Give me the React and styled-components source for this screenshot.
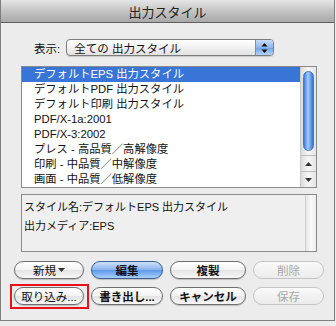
import { createGlobalStyle, styled } from "styled-components";

const GlobalStyle = createGlobalStyle`
  html, body {
    margin: 0;
    padding: 0;
    background: #ececec;
  }
  body {
    font-family: "Liberation Sans", "Noto Sans CJK JP", sans-serif;
    font-size: 11px;
    color: #111;
  }
`;

const jp = `"Liberation Sans", "Noto Sans CJK JP", sans-serif`;

const StyleWindow = styled.div`
  width: 333px;
  height: 320px;
  border: 1px solid #7e7e7e;
  border-top: none;
  background: #ececec;
  display: flex;
  flex-direction: column;
  overflow: hidden;
`;

const StyleTitleBar = styled.div`
  height: 22px;
  border-bottom: 1px solid #5e5e5e;
  background: linear-gradient(#e6e6e6, #c4c4c4 50%, #a9a9a9);
  display: flex;
  align-items: center;
  justify-content: center;
  font-family: ${jp};
  font-size: 13px;
  color: #222;
`;

const StyleBody = styled.div`
  display: flex;
  flex-direction: column;
  padding: 16px 0 0 20px;
`;

const StyleSelectRow = styled.div`
  display: flex;
  align-items: center;
  gap: 6px;
  padding-left: 13px;
  height: 17px;
`;

const StyleLabel = styled.span`
  font-family: ${jp};
  font-size: 11.5px;
`;

const StyleSelect = styled.div`
  width: 206px;
  height: 15px;
  border: 1px solid #7c7c7c;
  border-radius: 4px;
  background: linear-gradient(#ffffff, #f1f1f1 50%, #e2e2e2);
  display: flex;
  align-items: center;
  justify-content: space-between;
  overflow: hidden;
  box-shadow: 0 1px 1px rgba(0, 0, 0, 0.15);
`;

const StyleSelectText = styled.span`
  font-family: ${jp};
  font-size: 11.5px;
  padding-left: 7px;
`;

const StyleStepper = styled.div`
  width: 17px;
  height: 15px;
  border-left: 1px solid #6d8fc4;
  background: linear-gradient(#c9ddf7, #8fb6ec 50%, #6ea1e6 51%, #b6d3f8);
  display: flex;
  align-items: center;
  justify-content: center;
`;

const StyleList = styled.div`
  margin-top: 10px;
  width: 294px;
  height: 120px;
  border: 1px solid #8a8a8a;
  background: #fff;
  display: flex;
`;

const StyleRows = styled.div`
  flex: 1;
  display: flex;
  flex-direction: column;
`;

const StyleRow = styled.div`
  height: 15px;
  line-height: 15px;
  padding-left: 12px;
  font-family: ${jp};
  font-size: 11.3px;
  white-space: nowrap;
  background: ${(props) => (props.$selected ? "#3875d7" : "transparent")};
  color: ${(props) => (props.$selected ? "#fff" : "#111")};
`;

const StyleScrollbar = styled.div`
  width: 15px;
  border-left: 1px solid #c8c8c8;
  background: linear-gradient(90deg, #dcdcdc, #f6f6f6 50%, #e4e4e4);
  display: flex;
  flex-direction: column;
`;

const StyleThumbArea = styled.div`
  flex: 1;
  padding: 4px 2px 0 2px;
`;

const StyleThumb = styled.div`
  height: 78px;
  border-radius: 6px;
  border: 1px solid #4a77bc;
  background: linear-gradient(90deg, #3d7be0, #a8cbf7 45%, #6ea4ec 70%, #3a73d6);
`;

const StyleArrow = styled.div`
  height: 15px;
  border-top: 1px solid #bdbdbd;
  display: flex;
  align-items: center;
  justify-content: center;
`;

const StyleInfo = styled.div`
  margin-top: 6px;
  width: 294px;
  height: 56px;
  border: 1px solid #8a8a8a;
  background: #efefef;
  display: flex;
`;

const StyleInfoText = styled.div`
  flex: 1;
  padding: 3px 0 0 2px;
  display: flex;
  flex-direction: column;
  gap: 3px;
  font-family: ${jp};
  font-size: 11px;
`;

const StyleInfoTrack = styled.div`
  width: 10px;
  border-left: 1px solid #d0d0d0;
  background: linear-gradient(90deg, #e6e6e6, #fafafa 50%, #ececec);
`;

const StyleButtons = styled.div`
  display: grid;
  grid-template-columns: 70px 72px 76px 71px;
  column-gap: 7px;
  row-gap: 8px;
  padding: 9px 0 0 13px;
  margin-left: -20px;
`;

const StyleButton = styled.div`
  position: relative;
  height: 16px;
  border-radius: 9px;
  border: 1px solid ${(props) =>
    props.$disabled ? "#c4c4c4" : props.$primary ? "#3d5f94" : "#6f6f6f"};
  background: ${(props) =>
    props.$primary
      ? "linear-gradient(#cfe2fa, #8ab4ee 48%, #5d98ea 52%, #a9d0fb)"
      : props.$disabled
      ? "linear-gradient(#fafafa, #f2f2f2 50%, #ebebeb)"
      : "linear-gradient(#ffffff, #f3f3f3 48%, #e4e4e4 52%, #f8f8f8)"};
  color: ${(props) => (props.$disabled ? "#a8a8a8" : "#111")};
  font-family: ${jp};
  font-size: 11.5px;
  font-weight: ${(props) => (props.$bold ? 700 : 400)};
  display: flex;
  align-items: center;
  justify-content: center;
  gap: 2px;
  box-shadow: ${(props) =>
    props.$disabled ? "none" : "0 1px 1px rgba(0, 0, 0, 0.2)"};

  &::after {
    content: "";
    display: ${(props) => (props.$highlight ? "block" : "none")};
    position: absolute;
    left: -5px;
    right: -6px;
    top: -4px;
    bottom: -5px;
    border: 2px solid #e8101a;
  }
`;

const Triangle = ({ up, color = "#222" }) => (
  <svg width="7" height="4" viewBox="0 0 7 4">
    <polygon points={up ? "3.5,0 7,4 0,4" : "0,0 7,0 3.5,4"} fill={color} />
  </svg>
);

const items = [
  "デフォルトEPS 出力スタイル",
  "デフォルトPDF 出力スタイル",
  "デフォルト印刷 出力スタイル",
  "PDF/X-1a:2001",
  "PDF/X-3:2002",
  "プレス - 高品質／高解像度",
  "印刷 - 中品質／中解像度",
  "画面 - 中品質／低解像度",
];

const buttons = [
  { label: "新規", menu: true },
  { label: "編集", primary: true, bold: true },
  { label: "複製", bold: true },
  { label: "削除", disabled: true },
  { label: "取り込み...", highlight: true },
  { label: "書き出し...", bold: true },
  { label: "キャンセル", bold: true },
  { label: "保存", disabled: true },
];

const App = () => {
  return (
    <>
      <GlobalStyle />
      <StyleWindow>
        <StyleTitleBar>出力スタイル</StyleTitleBar>
        <StyleBody>
          <StyleSelectRow>
            <StyleLabel>表示:</StyleLabel>
            <StyleSelect>
              <StyleSelectText>全ての 出力スタイル</StyleSelectText>
              <StyleStepper>
                <svg width="7" height="10" viewBox="0 0 7 10">
                  <polygon points="3.5,0 6.5,3.5 0.5,3.5" fill="#111" />
                  <polygon points="0.5,6.5 6.5,6.5 3.5,10" fill="#111" />
                </svg>
              </StyleStepper>
            </StyleSelect>
          </StyleSelectRow>

          <StyleList>
            <StyleRows>
              {items.map((item, i) => (
                <StyleRow key={item} $selected={i === 0}>
                  {item}
                </StyleRow>
              ))}
            </StyleRows>
            <StyleScrollbar>
              <StyleThumbArea>
                <StyleThumb />
              </StyleThumbArea>
              <StyleArrow>
                <Triangle up color="#333" />
              </StyleArrow>
              <StyleArrow>
                <Triangle color="#333" />
              </StyleArrow>
            </StyleScrollbar>
          </StyleList>

          <StyleInfo>
            <StyleInfoText>
              <span>スタイル名:デフォルトEPS 出力スタイル</span>
              <span>出力メディア:EPS</span>
            </StyleInfoText>
            <StyleInfoTrack />
          </StyleInfo>

          <StyleButtons>
            {buttons.map((b) => (
              <StyleButton
                key={b.label}
                $primary={b.primary}
                $disabled={b.disabled}
                $bold={b.bold}
                $highlight={b.highlight}
              >
                {b.label}
                {b.menu && <Triangle color="#333" />}
              </StyleButton>
            ))}
          </StyleButtons>
        </StyleBody>
      </StyleWindow>
    </>
  );
};

export default App;
